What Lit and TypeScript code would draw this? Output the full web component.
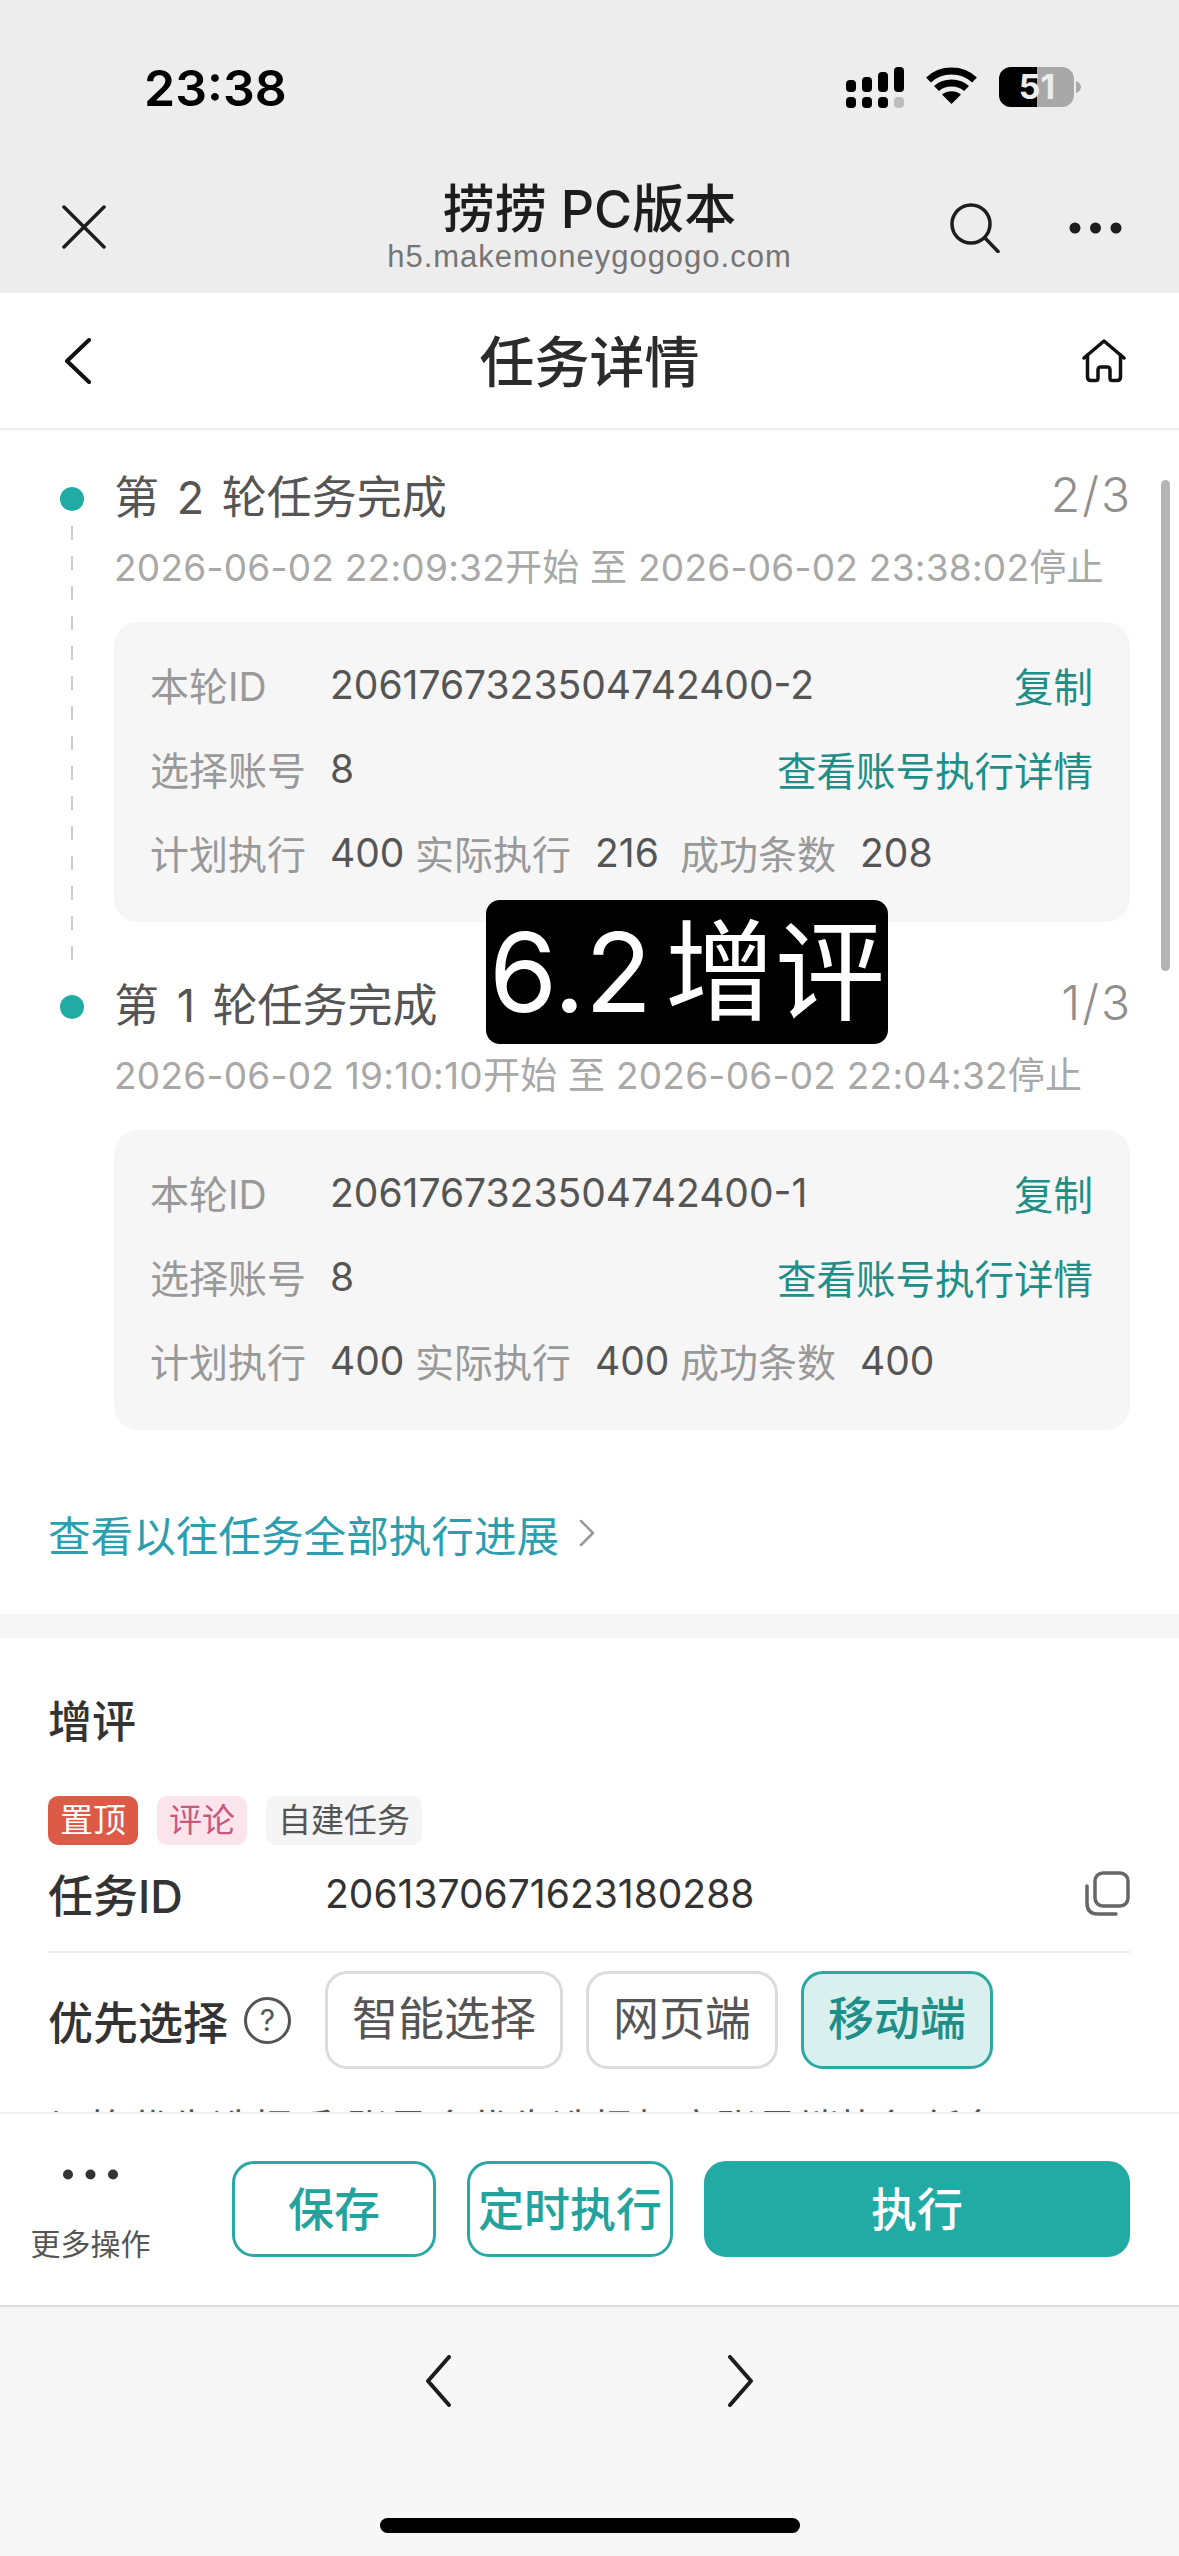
import { LitElement, html, css, svg } from 'lit';
import { customElement } from 'lit/decorators.js';

interface Round {
    title: string;
    progress: string;
    period: string;
    id: string;
    actual: string;
    success: string;
}

const rounds: Round[] = [
    {
        title: '第 2 轮任务完成',
        progress: '2/3',
        period: '2026-06-02 22:09:32开始 至 2026-06-02 23:38:02停止',
        id: '2061767323504742400-2',
        actual: '216',
        success: '208',
    },
    {
        title: '第 1 轮任务完成',
        progress: '1/3',
        period: '2026-06-02 19:10:10开始 至 2026-06-02 22:04:32停止',
        id: '2061767323504742400-1',
        actual: '400',
        success: '400',
    },
];

const icon = (w: number, h: number, body: unknown) => html`
    <svg width="${w}" height="${h}" viewBox="0 0 ${w} ${h}" fill="none">${body}</svg>
`;

@customElement('app-root')
export class AppRoot extends LitElement {
    static styles = css`
        :host {
            display: block;
            width: 1179px;
            height: 2556px;
            overflow: hidden;
            background: #fff;
            font-family: "Inter", "Noto Sans CJK SC", sans-serif;
            color: #333;
        }
        svg { display: block; }
        .page { height: 2556px; display: flex; flex-direction: column; }

        /* phone chrome */
        .status {
            height: 165px;
            background: #ededed;
            display: flex;
            padding: 60px 98px 0 144px;
            box-sizing: border-box;
            justify-content: space-between;
        }
        .time { font-size: 50px; font-weight: 600; line-height: 56px; color: #000; }
        .status-icons { display: flex; gap: 22px; padding-top: 7px; }
        .mini {
            height: 128px;
            background: #ededed;
            display: grid;
            grid-template-columns: 1fr auto 1fr;
            align-items: start;
            padding: 0 57px;
            box-sizing: border-box;
        }
        .mini-left { padding: 40px 0 0 5px; }
        .mini-mid { text-align: center; padding-top: 17px; }
        .mini-title { font-size: 52px; line-height: 56px; font-weight: 500; color: #1d1d1d; white-space: nowrap; }
        .mini-url {
            font-family: "Liberation Sans", sans-serif;
            font-size: 31px;
            line-height: 38px;
            letter-spacing: 1px;
            color: #757575;
        }
        .mini-right { display: flex; align-items: center; justify-content: flex-end; gap: 69px; padding-top: 38px; }

        .nav {
            height: 137px;
            border-bottom: 2px solid #eeeef0;
            box-sizing: border-box;
            display: grid;
            grid-template-columns: 1fr auto 1fr;
            align-items: center;
            padding: 0 53px;
        }
        .nav-back { padding-left: 11px; }
        .nav-title { font-size: 55px; font-weight: 500; color: #2b2b2b; margin-top: -6px; }
        .nav-home { justify-self: end; }

        /* scrolling content */
        .content { flex: 1; min-height: 0; overflow: hidden; position: relative; }
        .bar {
            position: absolute;
            left: 1161px;
            top: 50px;
            width: 9px;
            height: 491px;
            border-radius: 5px;
            background: #b4b4b4;
        }
        .stamp {
            position: absolute;
            left: 486px;
            top: 470px;
            width: 402px;
            height: 144px;
            border-radius: 14px;
            background: #000;
            color: #fff;
            font-size: 110px;
            line-height: 144px;
            text-align: center;
            white-space: nowrap;
            word-spacing: -18px;
        }
        .rounds { padding: 35px 49px 0 49px; }
        .round { display: grid; grid-template-columns: 65px 1fr; }
        .rail { display: flex; flex-direction: column; align-items: flex-start; padding-left: 11px; padding-top: 22px; }
        .dot { width: 24px; height: 24px; border-radius: 50%; background: #22aaa4; }
        .dash {
            flex: 1;
            width: 2px;
            margin: 15px 0 13px 11px;
            background: repeating-linear-gradient(#ccc 0 14px, transparent 14px 30px);
        }
        .round-body { padding-bottom: 51px; }
        .round:last-child .round-body { padding-bottom: 0; }
        .round-head { display: flex; justify-content: space-between; align-items: center; height: 58px; }
        .round-title { font-size: 45px; color: #555; word-spacing: 5px; }
        .round-progress { font-size: 48px; font-weight: 300; letter-spacing: 2px; margin-right: -2px; color: #8f8f8f; }
        .period { font-size: 37px; line-height: 50px; margin-top: 20px; color: #a8a8a8; white-space: nowrap; letter-spacing: 0.25px; }
        .card {
            margin-top: 29px;
            height: 300px;
            box-sizing: border-box;
            padding: 20px 37px 0 36px;
            border-radius: 24px;
            background: #f6f6f6;
        }
        .row { display: flex; align-items: center; height: 84px; font-size: 39px; color: #555; white-space: nowrap; }
        .label { color: #999; }
        .row > .label:first-child { width: 180px; flex: none; }
        .value { color: #555; }
        .count { min-width: 85px; }
        .row .gap { margin-right: 24px; }
        .action { margin-left: auto; color: #1d8f88; font-size: 39.5px; }

        .history {
            display: flex;
            align-items: center;
            gap: 20px;
            margin: 70px 0 0 48px;
            height: 66px;
            font-size: 42.6px;
            color: #2b9fb0;
        }
        .band { height: 24px; margin-top: 48px; background: #f6f6f6; }
        .task { padding: 52px 49px 0 48px; }
        .task-name { font-size: 44px; font-weight: 500; line-height: 64px; color: #333; }
        .tags { display: flex; gap: 19px; margin-top: 42px; }
        .tag {
            height: 49px;
            line-height: 49px;
            padding: 0 12px;
            border-radius: 10px;
            font-size: 33px;
        }
        .tag.top { background: #dc5a46; color: #fff; }
        .tag.kind { background: #fce4ec; color: #c9587f; }
        .tag.own { background: #f5f5f5; color: #555; }
        .id-row {
            display: grid;
            grid-template-columns: 277px 1fr auto;
            align-items: center;
            height: 108px;
            padding-bottom: 9px;
            box-sizing: border-box;
            border-bottom: 2px solid #eee;
        }
        .field { font-size: 45px; font-weight: 500; color: #333; }
        .id-value { font-size: 39px; color: #333; }
        .pick { display: flex; align-items: center; margin-top: 18px; height: 98px; }
        .pick-label { display: flex; align-items: center; gap: 16px; width: 277px; }
        .help {
            width: 47px;
            height: 47px;
            box-sizing: border-box;
            border: 3px solid #555;
            border-radius: 50%;
            color: #555;
            font-size: 30px;
            line-height: 41px;
            text-align: center;
        }
        .choices { display: flex; gap: 23px; }
        .choice {
            height: 98px;
            line-height: 88px;
            padding: 0 24px;
            box-sizing: border-box;
            border: 3px solid #dcdcdc;
            border-radius: 22px;
            font-size: 46px;
            color: #555;
        }
        .choice.on {
            background: #d9f0ee;
            border-color: #2aa8a3;
            color: #1d8f88;
            font-weight: 500;
        }
        .hint { margin-top: 30px; font-size: 41px; line-height: 60px; color: #555; white-space: nowrap; }

        /* action bar */
        .actions {
            height: 195px;
            box-sizing: border-box;
            border-top: 2px solid #f0f0f0;
            border-bottom: 2px solid #ddd;
            background: #fff;
            display: flex;
            padding: 47px 49px 0 31px;
        }
        .more { width: 119px; margin-right: 82px; padding-top: 8px; display: flex; flex-direction: column; align-items: center; }
        .more-label { margin-top: 44px; font-size: 30px; line-height: 40px; color: #555; white-space: nowrap; }
        .btns { flex: 1; display: grid; grid-template-columns: 204px 206px 1fr; gap: 31px; height: 96px; }
        .btn {
            box-sizing: border-box;
            border: 3px solid #2aa8a3;
            border-radius: 22px;
            font-size: 46px;
            font-weight: 500;
            line-height: 90px;
            text-align: center;
            color: #22a39d;
            white-space: nowrap;
        }
        .btn.primary { background: #22aaa4; color: #fff; border-color: #22aaa4; }

        .toolbar {
            height: 249px;
            background: #f7f7f7;
            display: flex;
            flex-direction: column;
            align-items: center;
            padding-top: 48px;
            box-sizing: border-box;
        }
        .arrows { display: flex; gap: 277px; }
        .home-bar { width: 420px; height: 15px; border-radius: 8px; background: #000; margin-top: 111px; }
    `;

    private renderRound(r: Round, last: boolean) {
        return html`
            <div class="round">
                <div class="rail">
                    <span class="dot"></span>
                    ${last ? null : html`<span class="dash"></span>`}
                </div>
                <div class="round-body">
                    <div class="round-head">
                        <span class="round-title">${r.title}</span>
                        <span class="round-progress">${r.progress}</span>
                    </div>
                    <div class="period">${r.period}</div>
                    <div class="card">
                        <div class="row">
                            <span class="label">本轮ID</span>
                            <span class="value">${r.id}</span>
                            <span class="action">复制</span>
                        </div>
                        <div class="row">
                            <span class="label">选择账号</span>
                            <span class="value">8</span>
                            <span class="action">查看账号执行详情</span>
                        </div>
                        <div class="row">
                            <span class="label">计划执行</span>
                            <span class="value count">400</span>
                            <span class="label gap">实际执行</span>
                            <span class="value count">${r.actual}</span>
                            <span class="label gap">成功条数</span>
                            <span class="value">${r.success}</span>
                        </div>
                    </div>
                </div>
            </div>
        `;
    }

    render() {
        return html`
            <div class="page">
                <div class="status">
                    <span class="time">23:38</span>
                    <div class="status-icons">
                        ${icon(58, 41, svg`
                            <g fill="#000">
                                <rect x="0" y="13" width="10" height="12" rx="4"/>
                                <rect x="16" y="10" width="10" height="15" rx="4"/>
                                <rect x="32" y="5" width="10" height="20" rx="4"/>
                                <rect x="48" y="0" width="10" height="25" rx="4"/>
                                <rect x="0" y="30" width="10" height="11" rx="4"/>
                                <rect x="16" y="30" width="10" height="11" rx="4"/>
                                <rect x="32" y="30" width="10" height="11" rx="4"/>
                            </g>
                            <rect x="48" y="30" width="10" height="11" rx="4" fill="#bdbdbd"/>
                        `)}
                        ${icon(51, 38, svg`
                            <g fill="none" stroke="#000" stroke-width="7">
                                <path d="M2.5 13 C15 1 36 1 48.5 13"/>
                                <path d="M10.5 21.5 C18 14 33 14 40.5 21.5"/>
                            </g>
                            <path d="M25.5 37 L16 27.5 C21 23 30 23 35 27.5 Z" fill="#000"/>
                        `)}
                        ${icon(82, 40, svg`
                            <rect x="0" y="0" width="75" height="40" rx="12" fill="#a8a8a8"/>
                            <path d="M38 0 H12 A12 12 0 0 0 0 12 V28 A12 12 0 0 0 12 40 H38 Z" fill="#000"/>
                            <path d="M77 14 C80 15 82 17.5 82 20 C82 22.5 80 25 77 26 Z" fill="#a8a8a8"/>
                            <text x="38" y="32" text-anchor="middle" font-size="34" font-weight="700" fill="#ededed" font-family="Inter, sans-serif">51</text>
                        `)}
                    </div>
                </div>
                <div class="mini">
                    <div class="mini-left">
                        ${icon(44, 44, svg`<path d="M2 2 L42 42 M42 2 L2 42" stroke="#1d1d1d" stroke-width="3.5" stroke-linecap="round"/>`)}
                    </div>
                    <div class="mini-mid">
                        <div class="mini-title">捞捞 PC版本</div>
                        <div class="mini-url">h5.makemoneygogogo.com</div>
                    </div>
                    <div class="mini-right">
                        ${icon(50, 50, svg`
                            <circle cx="21" cy="21" r="19" stroke="#1d1d1d" stroke-width="3.5"/>
                            <path d="M35 35 L48 48.5" stroke="#1d1d1d" stroke-width="3.5" stroke-linecap="round"/>
                        `)}
                        ${icon(53, 12, svg`
                            <g fill="#1d1d1d"><circle cx="6" cy="6" r="5.5"/><circle cx="26.5" cy="6" r="5.5"/><circle cx="47" cy="6" r="5.5"/></g>
                        `)}
                    </div>
                </div>
                <div class="nav">
                    <span class="nav-back">
                        ${icon(28, 46, svg`<path d="M25 2 L3 23 L25 44" stroke="#111" stroke-width="4" stroke-linecap="round" stroke-linejoin="round"/>`)}
                    </span>
                    <span class="nav-title">任务详情</span>
                    <span class="nav-home">
                        ${icon(44, 44, svg`
                            <path d="M2 19 L22 2 L42 19" stroke="#111" stroke-width="3.5" stroke-linecap="round" stroke-linejoin="round"/>
                            <path d="M5.5 16 V38 Q5.5 41.5 9 41.5 H14 Q16 41.5 16 39 V31 Q16 28 19 28 H25 Q28 28 28 31 V39 Q28 41.5 30 41.5 H35 Q38.5 41.5 38.5 38 V16" stroke="#111" stroke-width="3.5" stroke-linecap="round"/>
                        `)}
                    </span>
                </div>
                <div class="content">
                    <div class="rounds">
                        ${rounds.map((r, i) => this.renderRound(r, i === rounds.length - 1))}
                    </div>
                    <div class="history">
                        <span>查看以往任务全部执行进展</span>
                        ${icon(16, 28, svg`<path d="M2 2 L14 14 L2 26" stroke="#999" stroke-width="2.5" stroke-linecap="round" stroke-linejoin="round"/>`)}
                    </div>
                    <div class="band"></div>
                    <div class="task">
                        <div class="task-name">增评</div>
                        <div class="tags">
                            <span class="tag top">置顶</span>
                            <span class="tag kind">评论</span>
                            <span class="tag own">自建任务</span>
                        </div>
                        <div class="id-row">
                            <span class="field">任务ID</span>
                            <span class="id-value">2061370671623180288</span>
                            ${icon(46, 46, svg`
                                <rect x="11" y="2" width="33" height="33" rx="8" stroke="#666" stroke-width="3.5"/>
                                <path d="M3 15 V32 Q3 43 14 43 H32" stroke="#666" stroke-width="3.5" stroke-linecap="round"/>
                            `)}
                        </div>
                        <div class="pick">
                            <div class="pick-label">
                                <span class="field">优先选择</span>
                                <span class="help">?</span>
                            </div>
                            <div class="choices">
                                <span class="choice">智能选择</span>
                                <span class="choice">网页端</span>
                                <span class="choice on">移动端</span>
                            </div>
                        </div>
                        <div class="hint">切换优先选择后,账号会优先选择相应账号端执行任务</div>
                    </div>
                    <div class="bar"></div>
                    <div class="stamp">6.2 增评</div>
                </div>
                <div class="actions">
                    <div class="more">
                        ${icon(55, 11, svg`
                            <g fill="#333"><circle cx="5" cy="5.5" r="5"/><circle cx="27.5" cy="5.5" r="5"/><circle cx="50" cy="5.5" r="5"/></g>
                        `)}
                        <span class="more-label">更多操作</span>
                    </div>
                    <div class="btns">
                        <span class="btn">保存</span>
                        <span class="btn">定时执行</span>
                        <span class="btn primary">执行</span>
                    </div>
                </div>
                <div class="toolbar">
                    <div class="arrows">
                        ${icon(26, 52, svg`<path d="M24 2 L3 26 L24 50" stroke="#1d1d1d" stroke-width="4" stroke-linecap="round" stroke-linejoin="round"/>`)}
                        ${icon(26, 52, svg`<path d="M2 2 L23 26 L2 50" stroke="#1d1d1d" stroke-width="4" stroke-linecap="round" stroke-linejoin="round"/>`)}
                    </div>
                    <div class="home-bar"></div>
                </div>
            </div>
        `;
    }
}
